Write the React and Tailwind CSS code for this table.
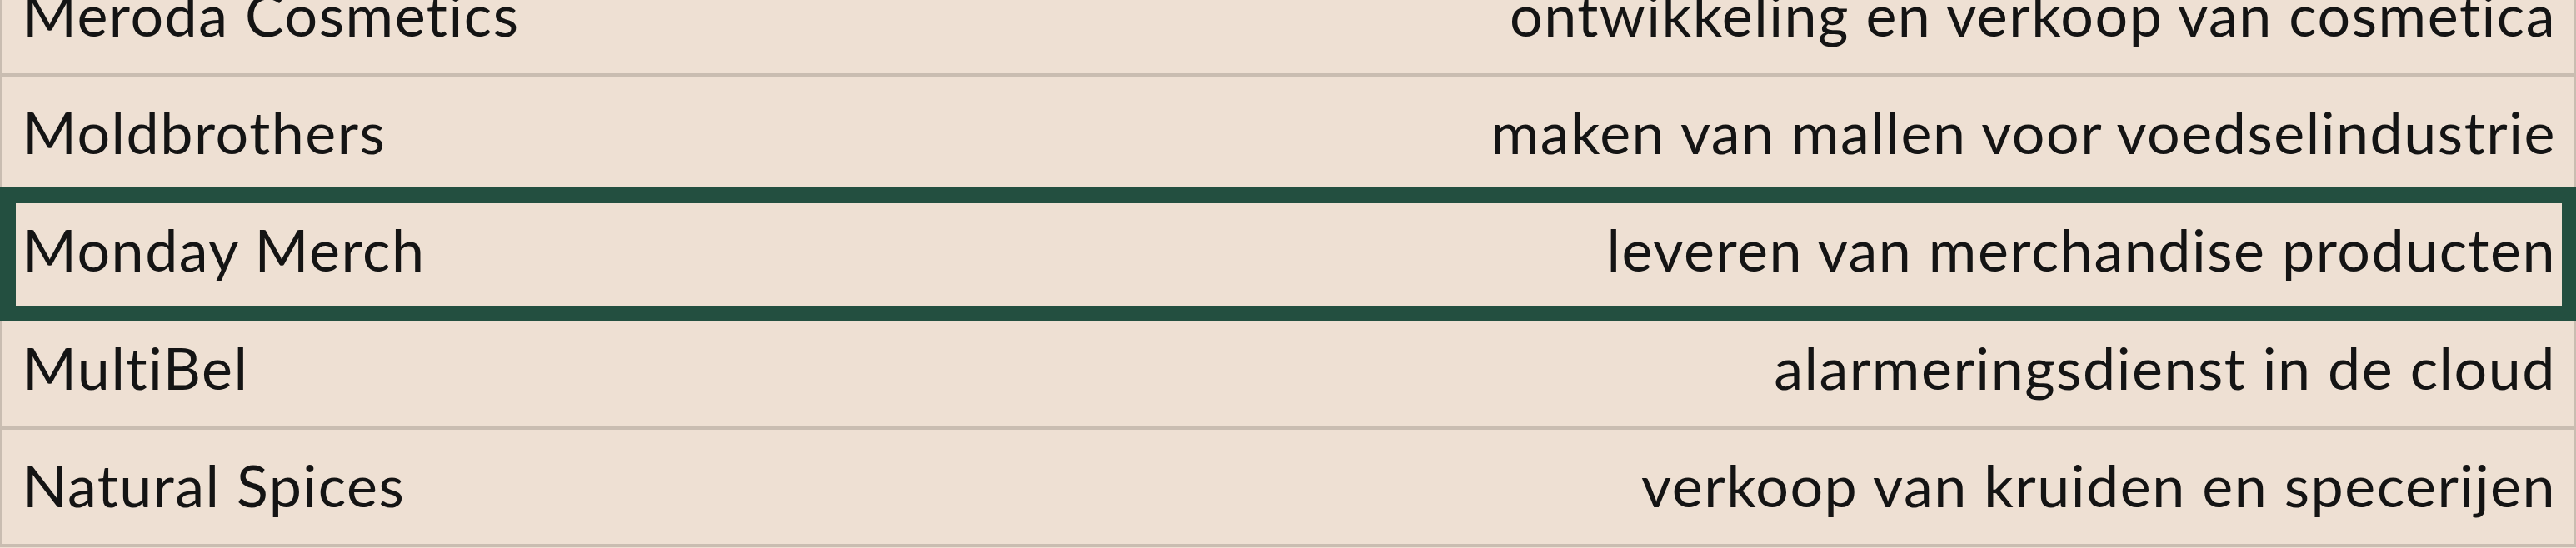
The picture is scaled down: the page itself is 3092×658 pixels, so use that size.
import React from "react";

const rows = [
  { name: "Meroda Cosmetics", desc: "ontwikkeling en verkoop van cosmetica" },
  { name: "Moldbrothers", desc: "maken van mallen voor voedselindustrie" },
  { name: "Monday Merch", desc: "leveren van merchandise producten", active: true },
  { name: "MultiBel", desc: "alarmeringsdienst in de cloud" },
  { name: "Natural Spices", desc: "verkoop van kruiden en specerijen" },
];

export default function App() {
  return (
    <div className="w-[3092px] h-[658px] overflow-hidden bg-[#eee0d3] font-['Lato',sans-serif] text-[#141414] [font-variant-ligatures:none]">
      <div className="-mt-[49px] border-x-[3px] border-[#c9bdb1]">
        {rows.map((r) => (
          <div
            key={r.name}
            className="relative flex items-center justify-between h-[141.3px] border-b-4 border-[#c9bdb1] pl-[24px] pr-[21px] pb-[6px] text-[70px] leading-none tracking-[1.5px] whitespace-nowrap"
          >
            <span>{r.name}</span>
            <span>{r.desc}</span>
            {r.active && (
              <div className="absolute z-10 pointer-events-none -top-[10px] -bottom-[15px] -left-[3px] -right-[3px] border-solid border-[#234f40] border-t-[20px] border-b-[19px] border-l-[19px] border-r-[17px]" />
            )}
          </div>
        ))}
      </div>
    </div>
  );
}
